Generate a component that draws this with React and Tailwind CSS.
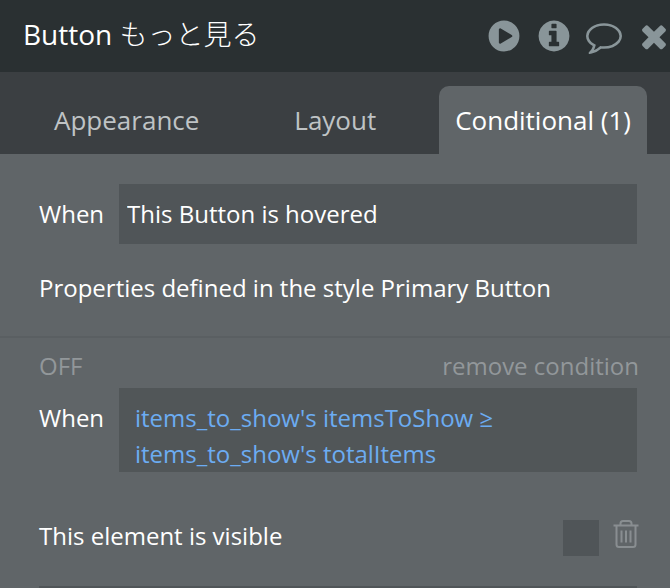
import { useState } from "react";

function GlyphButton({ label, viewBox = "0 0 1792 1792", className = "w-9", path }) {
  return (
    <button type="button" aria-label={label} className="shrink-0 text-[#899599]">
      <svg viewBox={viewBox} className={`block h-9 ${className}`} fill="currentColor" aria-hidden="true">
        <path fillRule="evenodd" d={path} />
      </svg>
    </button>
  );
}

const PLAY =
  "M896 128a768 768 0 1 0 0 1536a768 768 0 1 0 0-1536zM1280 951l-544 320q-15 9-32 9-16 0-32-8-32-19-32-56v-640q0-37 32-56 33-18 64 1l544 320q32 18 32 55t-32 55z";
const INFO =
  "M1152 1376v-160q0-14-9-23t-23-9h-96v-512q0-14-9-23t-23-9h-320q-14 0-23 9t-9 23v160q0 14 9 23t23 9h96v320h-96q-14 0-23 9t-9 23v160q0 14 9 23t23 9h448q14 0 23-9t9-23zm-128-896v-160q0-14-9-23t-23-9h-192q-14 0-23 9t-9 23v160q0 14 9 23t23 9h192q14 0 23-9t9-23zm640 416q0 209-103 385.5t-279.5 279.5-385.5 103-385.5-103-279.5-279.5-103-385.5 103-385.5 279.5-279.5 385.5-103 385.5 103 279.5 279.5 103 385.5z";
const COMMENT =
  "M896 384q-204 0-381.5 69.5t-282 187.5-104.5 255q0 112 71.5 213.5t201.5 175.5l87 50-27 96q-24 91-70 172 152-63 275-171l43-38 57 6q69 8 130 8 204 0 381.5-69.5t282-187.5 104.5-255-104.5-255-282-187.5-381.5-69.5zm896 512q0 174-120 321.5t-326 233-450 85.5q-70 0-145-8-198 175-460 242-49 14-114 22h-5q-15 0-27-10.5t-16-27.5v-1q-3-4-.5-12t2-10 4.5-9.5l6-9 7-8.5 8-9q7-8 31-34.5t34.5-38 31-39.5 32.5-51 27-59 26-76q-157-89-247.5-220t-90.5-281q0-130 71-248.5t191-204.5 286-136.5 348-50.5 348 50.5 286 136.5 191 204.5 71 248.5z";
const TIMES =
  "M1490 1322q0 40-28 68l-136 136q-28 28-68 28t-68-28l-294-294-294 294q-28 28-68 28t-68-28l-136-136q-28-28-28-68t28-68l294-294-294-294q-28-28-28-68t28-68l136-136q28-28 68-28t68 28l294 294 294-294q28-28 68-28t68 28l136 136q28 28 28 68t-28 68l-294 294 294 294q28 28 28 68z";

function Header() {
  return (
    <header className="flex h-[72px] items-center bg-[#2a3032] pl-[23px] pr-1">
      <h1 className="min-w-0 flex-1 truncate pb-1 text-[28px] leading-10">
        Button <span className="font-light">もっと見る</span>
      </h1>
      <div className="flex items-center gap-5">
        <div className="flex gap-[14px]">
          <GlyphButton label="Preview" path={PLAY} />
          <GlyphButton label="Information" path={INFO} />
          <GlyphButton label="Comments" path={COMMENT} />
        </div>
        <GlyphButton label="Close" viewBox="301 0 1192 1792" className="w-6" path={TIMES} />
      </div>
    </header>
  );
}

function Tabs() {
  return (
    <div role="tablist" className="flex h-[82px] items-end bg-[#3b3f42] pl-[38px] pr-[23px] text-[26px] leading-9 text-[#bfc3c5]">
      <button type="button" role="tab" aria-selected="false" className="h-[68px] px-4">
        Appearance
      </button>
      <div className="flex flex-1 justify-center pl-4">
        <button type="button" role="tab" aria-selected="false" className="h-[68px] px-4">
          Layout
        </button>
      </div>
      <button type="button" role="tab" aria-selected="true" className="h-[68px] rounded-t-[10px] bg-[#606568] px-4 text-white">
        Conditional (1)
      </button>
    </div>
  );
}

export default function App() {
  const [hovered, setHovered] = useState("This Button is hovered");
  const [expression, setExpression] = useState("items_to_show's itemsToShow ≥\nitems_to_show's totalItems");
  const [visible, setVisible] = useState(false);

  return (
    <main className="flex min-h-screen flex-col overflow-hidden bg-[#606568] font-['Open_Sans','Noto_Sans_CJK_JP',sans-serif] text-2xl leading-9 text-white">
      <Header />
      <Tabs />

      <section className="border-b-2 border-[#5a5f62] pt-[30px] pr-[33px] pb-[30px] pl-[39px]">
        <div className="flex items-center">
          <label htmlFor="style-condition" className="w-20 shrink-0">When</label>
          <input
            id="style-condition"
            value={hovered}
            onChange={(e) => setHovered(e.target.value)}
            className="h-[60px] min-w-0 flex-1 bg-[#505558] px-2 pb-[2px] outline-none"
          />
        </div>
        <p className="mt-[26px]">Properties defined in the style Primary Button</p>
      </section>

      <section className="pt-[10px] pl-[39px]">
        <div className="flex justify-between pr-[31px] text-[#92979a]">
          <button type="button">OFF</button>
          <button type="button">remove condition</button>
        </div>
        <div className="mt-1 flex items-start pr-[33px]">
          <label htmlFor="custom-condition" className="w-20 shrink-0 pt-3">When</label>
          <textarea
            id="custom-condition"
            rows={2}
            value={expression}
            onChange={(e) => setExpression(e.target.value)}
            className="block min-w-0 flex-1 resize-none overflow-hidden bg-[#515658] px-4 pt-3 text-[#6cacf2] outline-none"
          />
        </div>
        <div className="mt-[46px] flex items-start pr-[31px]">
          <label htmlFor="element-visible" className="flex-1">This element is visible</label>
          <input
            id="element-visible"
            type="checkbox"
            checked={visible}
            onChange={(e) => setVisible(e.target.checked)}
            className="mt-[2px] size-9 appearance-none bg-[#505558] checked:bg-[#6cacf2]"
          />
          <button type="button" aria-label="Delete property" className="ml-[14px] mt-[1px] text-[#898e91]">
            <svg viewBox="0 0 26 30" className="block h-[30px] w-[26px]" fill="none" stroke="currentColor" strokeWidth="2" aria-hidden="true">
              <path d="M0.500 6.500h25M7.500 6V4.500q0-2.500 2.500-2.500h6q2.500 0 2.500 2.500V6M3.500 7v18.500q0 2.500 2.500 2.500h14q2.500 0 2.500-2.500V7" />
              <path d="M8.500 11.500v12M13 11.500v12M17.500 11.500v12" />
            </svg>
          </button>
        </div>
        <div className="mt-[30px] -mb-[58px] pr-[33px]">
          <select aria-label="Property to change" defaultValue="" className="block h-[60px] w-full appearance-none bg-[#505558]">
            <option value="" />
          </select>
        </div>
      </section>
    </main>
  );
}
